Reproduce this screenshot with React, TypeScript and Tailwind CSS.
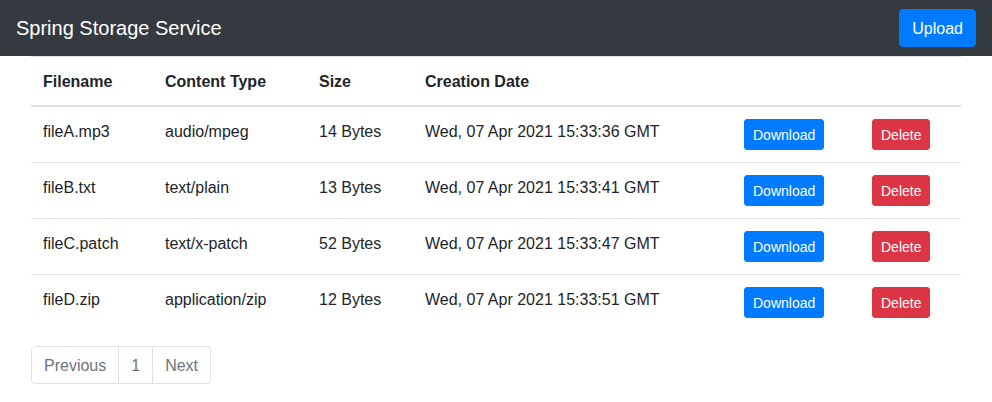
import React from 'react';

const files = [
  { name: 'fileA.mp3', type: 'audio/mpeg', size: '14 Bytes', date: 'Wed, 07 Apr 2021 15:33:36 GMT' },
  { name: 'fileB.txt', type: 'text/plain', size: '13 Bytes', date: 'Wed, 07 Apr 2021 15:33:41 GMT' },
  { name: 'fileC.patch', type: 'text/x-patch', size: '52 Bytes', date: 'Wed, 07 Apr 2021 15:33:47 GMT' },
  { name: 'fileD.zip', type: 'application/zip', size: '12 Bytes', date: 'Wed, 07 Apr 2021 15:33:51 GMT' },
];

const th = 'text-left font-bold px-3 pt-[13px] pb-[11px] border-t border-t-[#dee2e6] border-b-2 border-b-[#dee2e6] align-bottom';
const td = 'px-3 pt-[13px] pb-[11px] align-top border-t border-[#dee2e6]';
const tdBtn = 'p-3 align-top border-t border-[#dee2e6]';

export default function App() {
  return (
    <div className="min-h-[402px] bg-white text-[#212529] text-base leading-6 font-['Liberation_Sans',Arial,sans-serif]">
      {/* Navbar */}
      <nav className="h-[56px] bg-[#343a40] flex items-center justify-between px-4">
        <span className="text-[20px] leading-[30px] text-white">Spring Storage Service</span>
        <button className="h-[38px] px-3 pt-[1px] rounded bg-[#007bff] text-white text-base border border-[#007bff]">
          Upload
        </button>
      </nav>

      {/* Files table */}
      <div className="w-[960px] mx-auto px-[15px]">
        <table className="w-[930px] border-collapse table-fixed mb-4">
          <colgroup>
            <col className="w-[122px]" />
            <col className="w-[154px]" />
            <col className="w-[106px]" />
            <col className="w-[319px]" />
            <col className="w-[128px]" />
            <col className="w-[101px]" />
          </colgroup>
          <thead>
            <tr>
              <th className={th}>Filename</th>
              <th className={th}>Content Type</th>
              <th className={th}>Size</th>
              <th className={th}>Creation Date</th>
              <th className={th}></th>
              <th className={th}></th>
            </tr>
          </thead>
          <tbody>
            {files.map((f) => (
              <tr key={f.name}>
                <td className={td}>{f.name}</td>
                <td className={td}>{f.type}</td>
                <td className={td}>{f.size}</td>
                <td className={td + ' whitespace-nowrap'}>{f.date}</td>
                <td className={tdBtn}>
                  <button className="h-[31px] px-2 pt-[1px] rounded-[3px] bg-[#007bff] border border-[#007bff] text-white text-sm leading-[21px]">
                    Download
                  </button>
                </td>
                <td className={tdBtn}>
                  <button className="h-[31px] px-2 pt-[1px] rounded-[3px] bg-[#dc3545] border border-[#dc3545] text-white text-sm leading-[21px]">
                    Delete
                  </button>
                </td>
              </tr>
            ))}
          </tbody>
        </table>

        {/* Pagination */}
        <div className="flex">
          <span className="h-[38px] px-3 pt-[7px] pb-[5px] border border-[#dee2e6] rounded-l text-[#6c757d]">Previous</span>
          <span className="h-[38px] px-3 pt-[7px] pb-[5px] border border-l-0 border-[#dee2e6] text-[#6c757d]">1</span>
          <span className="h-[38px] px-3 pt-[7px] pb-[5px] border border-l-0 border-[#dee2e6] rounded-r text-[#6c757d]">Next</span>
        </div>
      </div>
    </div>
  );
}
